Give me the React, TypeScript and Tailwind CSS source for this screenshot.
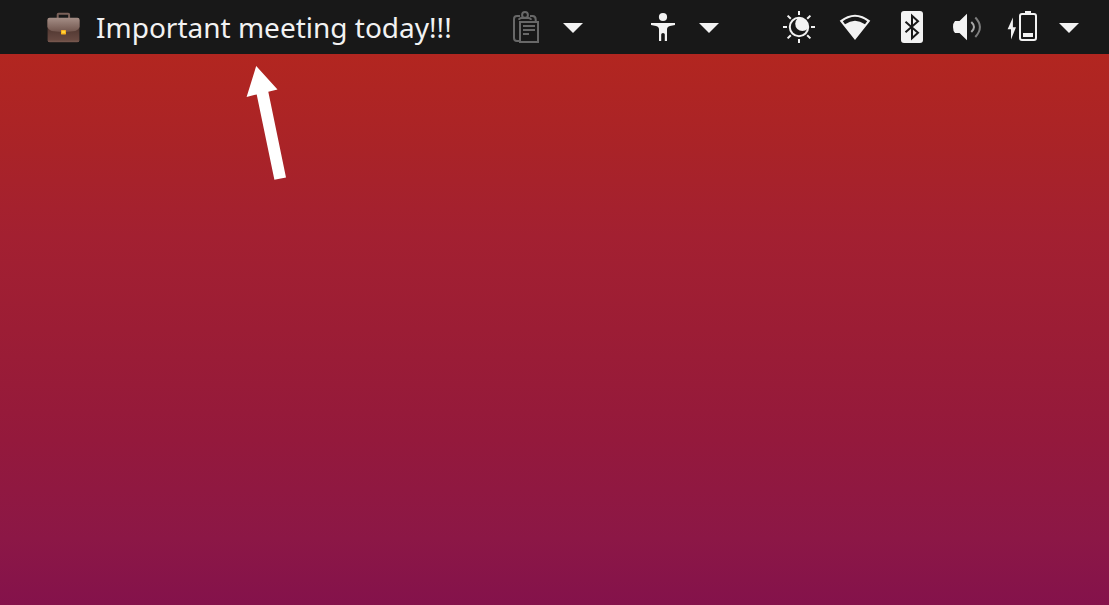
import type { ReactNode } from "react";

function Icon({ children, className = "" }: { children: ReactNode; className?: string }) {
  return (
    <svg viewBox="0 0 32 32" aria-hidden="true" className={`size-8 shrink-0 ${className}`}>
      {children}
    </svg>
  );
}

function Caret() {
  return (
    <svg viewBox="0 0 20 32" aria-hidden="true" className="h-8 w-5 shrink-0">
      <path d="M0 12H20L10 22Z" fill="currentColor" />
    </svg>
  );
}

function Briefcase() {
  return (
    <svg viewBox="0 0 33 32" aria-hidden="true" className="h-8 w-[33px] shrink-0">
      <defs>
        <linearGradient id="flap" x1="0" y1="0" x2="0" y2="1">
          <stop offset="0" stopColor="#a58e86" />
          <stop offset="0.5" stopColor="#8a7169" />
          <stop offset="1" stopColor="#70544c" />
        </linearGradient>
        <linearGradient id="case" x1="0" y1="0" x2="0" y2="1">
          <stop offset="0.4" stopColor="#4f3630" />
          <stop offset="1" stopColor="#6b4c44" />
        </linearGradient>
      </defs>
      <path d="M10.7 8V3.6Q10.7 2.7 11.6 2.7H21.2Q22.1 2.7 22.1 3.6V8" fill="none" stroke="#7b625a" strokeWidth="2" />
      <rect x="0.6" y="7" width="31.8" height="24.2" rx="2" fill="url(#case)" />
      <path d="M0.4 9Q0.4 6.8 2.6 6.8H30.4Q32.6 6.8 32.6 9V16Q31 20 26 20.3L19 21H14L7 20.3Q2 20 0.4 16Z" fill="url(#flap)" />
      <path d="M1 30.2H32" stroke="#7a5c53" strokeWidth="1" />
      <rect x="14" y="19" width="5" height="4.4" rx="0.6" fill="#f9b21d" />
      <rect x="15" y="20" width="3" height="2" fill="#ffd43b" />
    </svg>
  );
}

function Clipboard() {
  return (
    <Icon className="text-[#686868]">
      <g fill="none" stroke="currentColor" strokeWidth="2">
        <path d="M8 30H6Q3 30 3 27V8Q3 5 6 5H9" />
        <path d="M19 5H21.5Q24.7 5 24.7 8.5V11" />
        <circle cx="14" cy="3.9" r="2.9" />
        <path d="M8 8.8Q8.3 7 10.5 7H17.5Q19.7 7 20 8.8" />
        <rect x="9" y="11" width="18" height="20" />
        <path d="M12 15H24M12 19H24M12 23H18" />
      </g>
    </Icon>
  );
}

function Person() {
  return (
    <Icon>
      <circle cx="16" cy="6" r="4.1" fill="currentColor" />
      <path d="M4 12H28V14L23 15Q20 15.6 20 18.5V30H17.8V23.5Q17.8 22 16 22T14.2 23.5V30H12V18.5Q12 15.6 9 15L4 14Z" fill="currentColor" />
    </Icon>
  );
}

function NightLight() {
  return (
    <Icon>
      <clipPath id="disc">
        <circle cx="16" cy="16" r="9.3" />
      </clipPath>
      <circle cx="19.4" cy="12.8" r="7.2" fill="currentColor" clipPath="url(#disc)" />
      <g fill="none" stroke="currentColor" strokeWidth="2">
        <circle cx="16" cy="16" r="9.2" />
        <path d="M16 0V4M16 28V32M0 16H4M28 16H32M4.6 4.6L7.8 7.8M24.2 24.2L27.4 27.4M4.6 27.4L7.8 24.2M24.2 7.8L27.4 4.6" />
      </g>
    </Icon>
  );
}

function Wifi() {
  return (
    <Icon>
      <path
        fillRule="evenodd"
        fill="currentColor"
        d="M0.7 9.7Q16 -2.3 31.3 9.7L16 29Z M3.8 10.3Q16 1.3 28.2 10.3L26 13.2Q16 6.2 6 13.2Z"
      />
    </Icon>
  );
}

function Bluetooth() {
  return (
    <Icon>
      <rect x="6" y="0" width="22" height="32" rx="3" fill="currentColor" />
      <path d="M10.5 10.8L23 21.8L17 27.2V4.8L23 10.2L10.5 21.2" fill="none" stroke="#181818" strokeWidth="2" />
    </Icon>
  );
}

function Volume() {
  return (
    <Icon>
      <path d="M4 10H8.5L16 2.7V29.3L8.5 22H4Q2 20 2 16T4 10Z" fill="currentColor" />
      <path d="M20.3 11Q25.7 16 20.3 21" fill="none" stroke="#a8a8a8" strokeWidth="2" />
      <path d="M24.3 6.5Q33.5 16 24.3 26" fill="none" stroke="#7d7d7d" strokeWidth="2" />
    </Icon>
  );
}

function Battery() {
  return (
    <Icon>
      <path d="M5.9 6.5L0.6 18.3H4V28.5L9 16.3H5.9Z" fill="currentColor" />
      <rect x="13" y="3" width="16" height="26" rx="2" fill="none" stroke="currentColor" strokeWidth="2" />
      <path d="M18 0H24V3H18ZM16 22H26V26H16Z" fill="currentColor" />
    </Icon>
  );
}

export default function App() {
  return (
    <div className="flex min-h-screen flex-col bg-[#181818] font-['Noto_Sans',sans-serif]">
      <header className="flex h-[54px] items-center justify-between bg-[#181818] pr-[30px] pl-[47px] text-[#f2f2f2]">
        <button type="button" className="flex items-center gap-4 whitespace-nowrap text-[28px] leading-8">
          <Briefcase />
          <span>Important meeting today!!!</span>
        </button>
        <nav aria-label="Indicators" className="flex items-center gap-16">
          <button type="button" aria-label="Clipboard" className="flex items-center gap-5">
            <Clipboard />
            <Caret />
          </button>
          <button type="button" aria-label="Accessibility" className="flex items-center gap-5">
            <Person />
            <Caret />
          </button>
          <button type="button" aria-label="System" className="flex items-center gap-5">
            <span className="flex items-center gap-6">
              <NightLight />
              <Wifi />
              <Bluetooth />
              <Volume />
              <Battery />
            </span>
            <Caret />
          </button>
        </nav>
      </header>
      <main className="relative flex-1 bg-[linear-gradient(to_bottom,#b22620_0%,#a92328_18%,#a32031_33%,#9c1d35_50%,#94193c_70%,#8c1746_88%,#84124b_100%)]">
        <svg viewBox="0 0 42 116" aria-hidden="true" className="absolute top-3 left-[246px] h-[116px] w-[42px]">
          <path d="M10.2 0L31.5 23.4L22.3 25.7L40 111.4L28.4 113.8L10.7 28.4L0.6 31Z" fill="#fff" />
        </svg>
      </main>
    </div>
  );
}
